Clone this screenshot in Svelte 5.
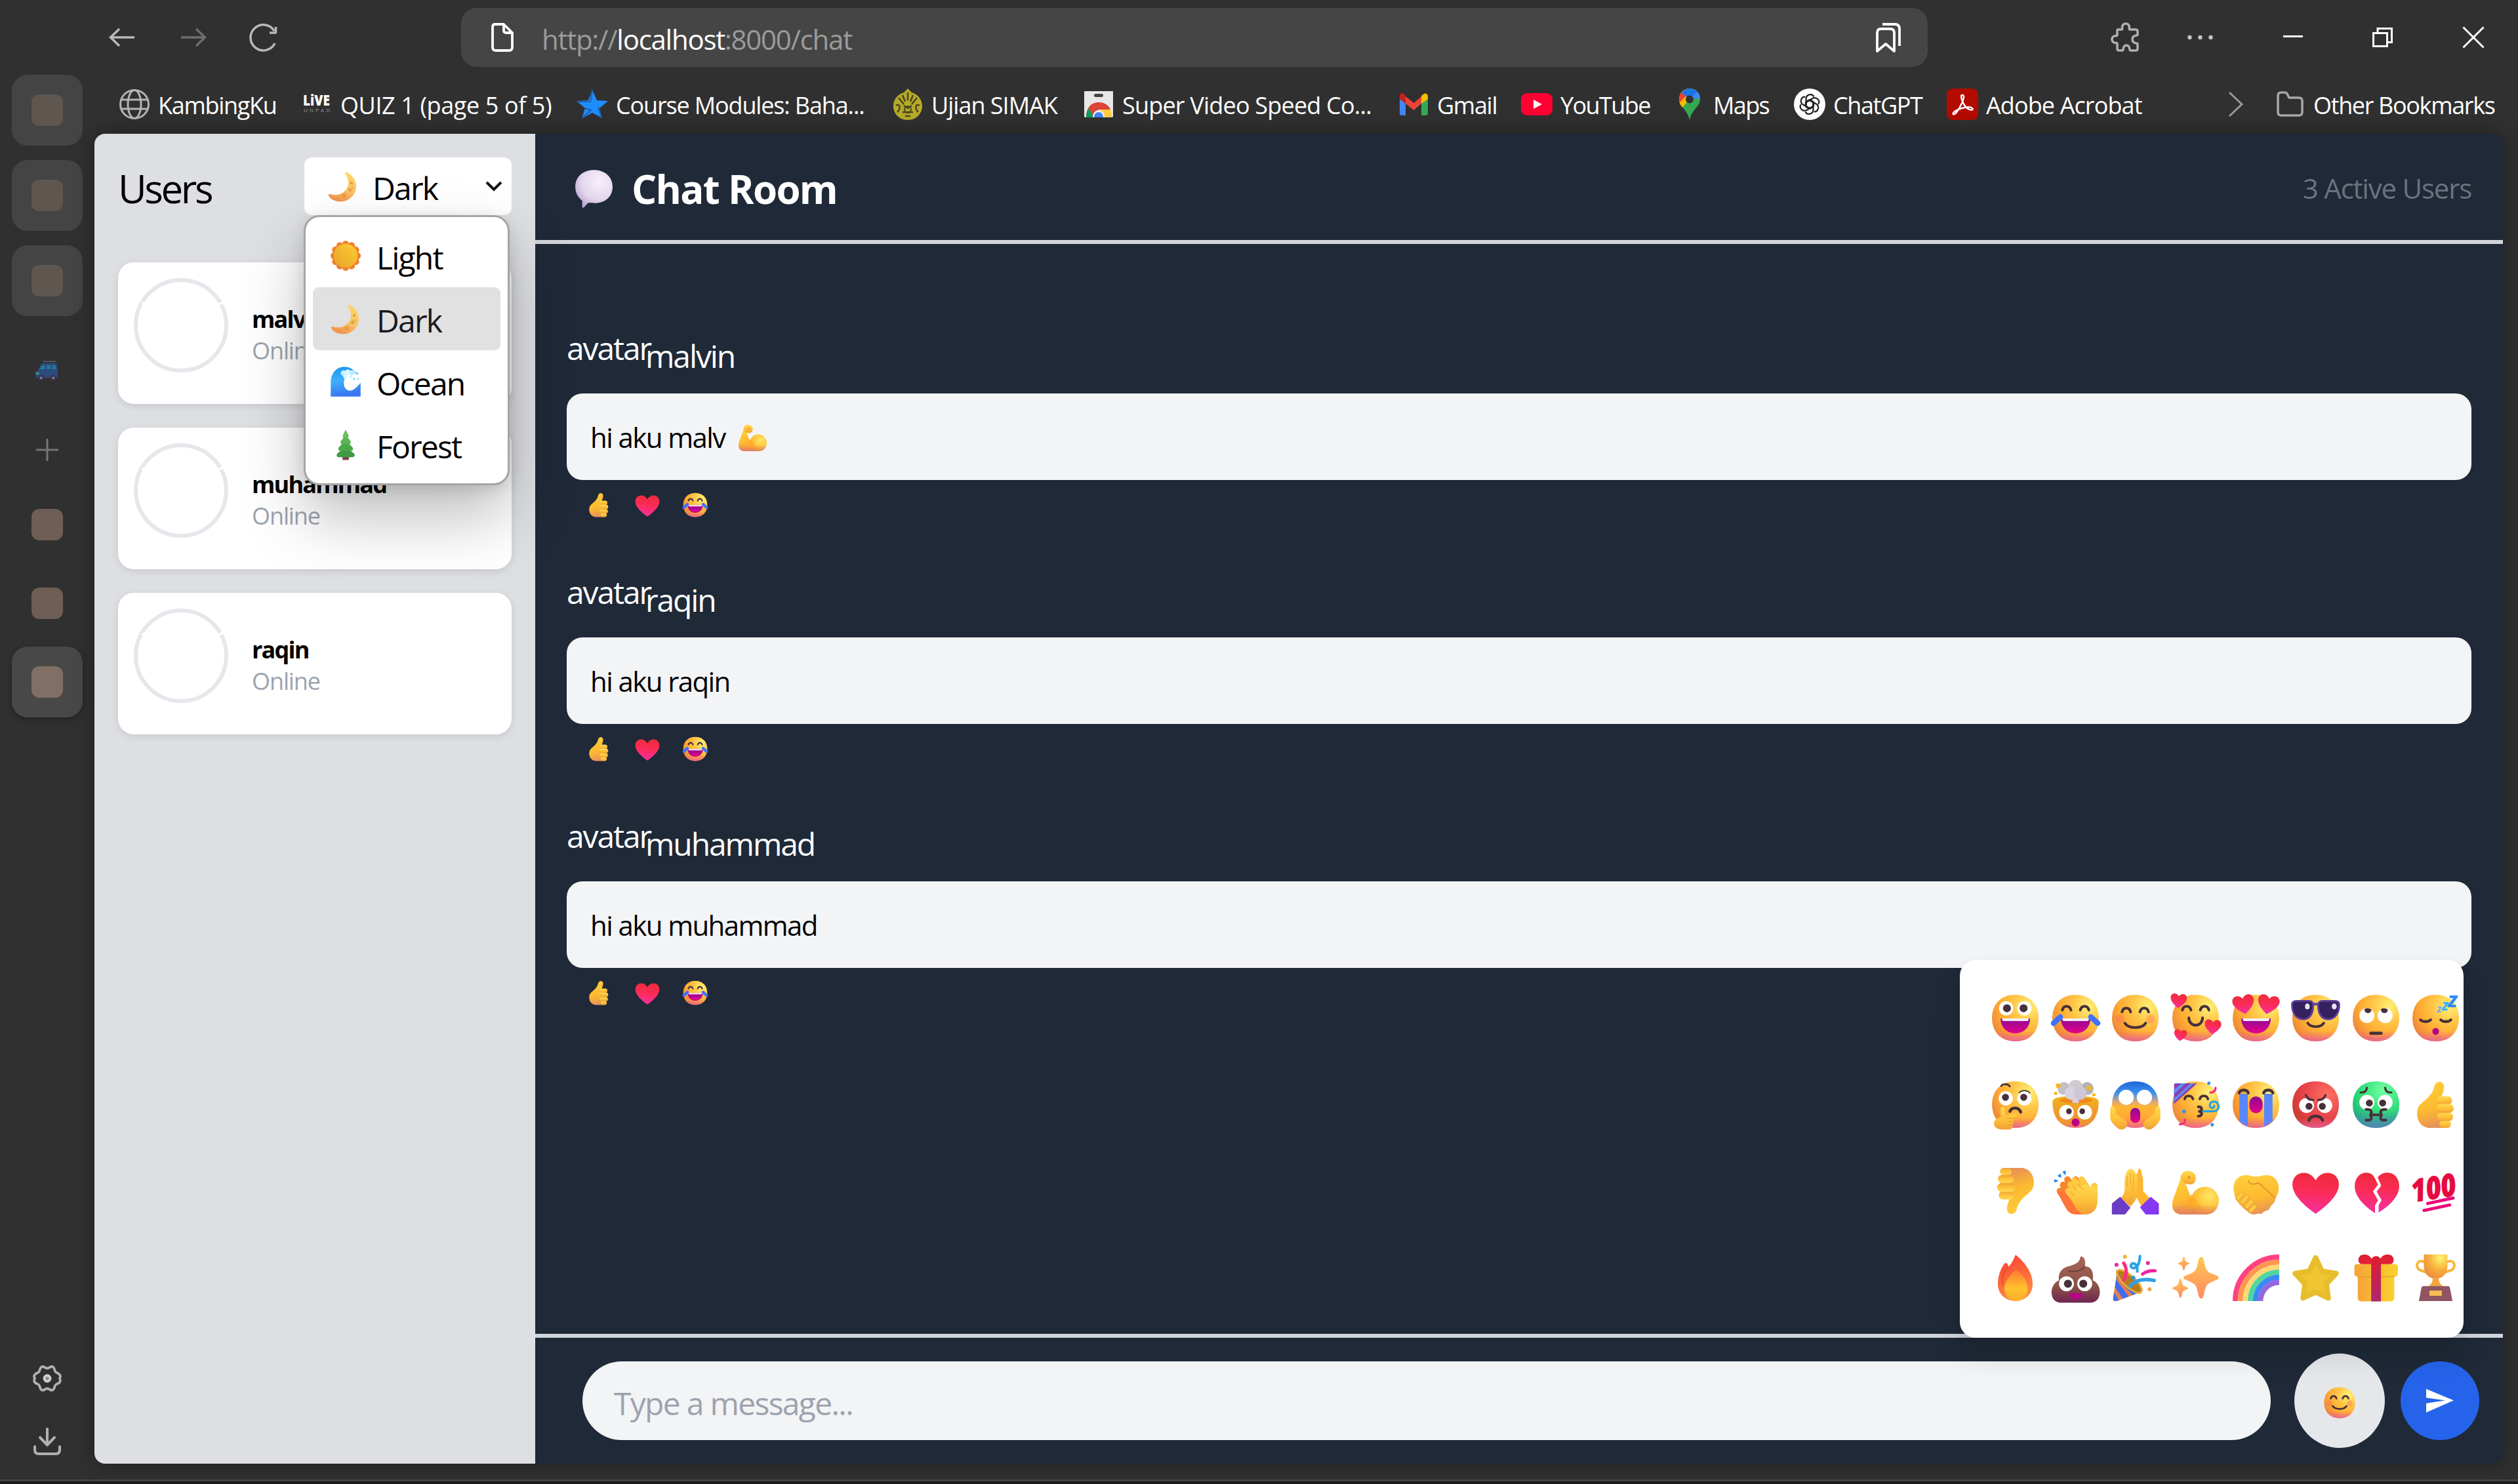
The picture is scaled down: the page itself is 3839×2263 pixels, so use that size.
<script>
  const FACE =
    'M16 30C25.33 30 30 23.73 30 16S25.33 2 16 2 2 8.27 2 16 6.67 30 16 30z';
  const INK = '#47303a';

  const face = (fill = 'e-face', rim = 'e-rim') =>
    `<path d="${FACE}" fill="url(#${fill})"/><path d="${FACE}" fill="url(#${rim})"/>`;
  const mirror = (s) => s + `<g transform="matrix(-1 0 0 1 32 0)">${s}</g>`;
  const dot = (x, y, r, fill) => `<circle cx="${x}" cy="${y}" r="${r}" fill="${fill}"/>`;
  const line = (d, w = 1.6, color = INK) =>
    `<path d="${d}" fill="none" stroke="${color}" stroke-width="${w}" stroke-linecap="round" stroke-linejoin="round"/>`;
  const shape = (d, fill) => `<path d="${d}" fill="${fill}"/>`;
  const eyes = (y, r = 4.3, dx = 0.4, pr = 2.2, dy = 0) =>
    mirror(dot(10.5, y, r, '#fff') + dot(10.5 + dx, y + dy, pr, INK));
  const happyEyes = (y) => mirror(line(`M8 ${y}C8.8 ${y - 3.1} 12.4 ${y - 3.1} 13.2 ${y}`));
  const grin =
    shape('M7.2 16.2H24.9C24.9 21.6 21 25.2 16 25.2S7.2 21.6 7.2 16.2z', 'url(#e-mouth)') +
    shape('M7.9 16.2H24.2L23.9 17.2Q23.7 17.8 23.1 17.8H9Q8.4 17.8 8.2 17.2z', '#f4eefa');
  const heart = (x, y, w, rot = 0, fill = 'url(#e-heart)') =>
    `<path transform="translate(${x} ${y}) rotate(${rot}) scale(${w})" fill="${fill}" d="M0 .45C-.3 .24-.5 .02-.5-.18C-.5-.34-.38-.43-.26-.43C-.14-.43-.05-.36 0-.27C.05-.36 .14-.43 .26-.43C.38-.43 .5-.34 .5-.18C.5 .02 .3 .24 0 .45z"/>`;
  const sparkle = (x, y, rx, ry) =>
    `<path transform="translate(${x} ${y}) scale(${rx} ${ry})" fill="url(#e-spark)" d="M0-1C.1-1 .14-.9 .2-.66C.27-.35 .38-.27 .68-.17C.9-.1 1-.08 1 0S.9 .1 .68 .17C.38 .27 .27 .35 .2 .66C.14 .9 .1 1 0 1S-.14 .9-.2 .66C-.27 .35-.38 .27-.68 .17C-.9 .1-1 .08-1 0S-.9-.1-.68-.17C-.38-.27-.27-.35-.2-.66C-.14-.9-.1-1 0-1z"/>`;
  const finger = (x, y, w, h) =>
    `<rect x="${x}" y="${y}" width="${w}" height="${h}" rx="${h / 2}" fill="url(#e-finger)"/>`;
  const thumb =
    shape('M15.2 5C16 1.2 21 1.5 21 5.2C21 8 19.8 10 19.4 11.5L20.5 12L21.5 30H12.5C8 30 4.8 26.3 4.8 21.4C4.8 15.6 8.6 15 12 11C13.8 9 14.6 7.5 15.2 5z', 'url(#e-hand)') +
    finger(18.2, 25.6, 7, 4.4) + finger(16.8, 20.8, 9.7, 5.1) + finger(16.6, 11, 9.3, 5) + finger(16.1, 15.6, 10.8, 5.3);

  const EMOJI = {
    grin: face() + eyes(10.1, 4.3, 0.5, 2.4) + grin,
    joy: face() + happyEyes(11.2) + grin + mirror(line('M6.8 15.3L2.7 19.1', 3.3, '#3f72ff')),
    smile:
      face() + mirror(dot(6.8, 16.5, 2.6, 'rgba(255,100,100,.35)')) + happyEyes(12.3) +
      line('M9.7 19C12 22.6 20 22.6 22.3 19'),
    adore:
      face() + happyEyes(11.2) + line('M11.9 15.8C12 21.8 20.1 21.8 20.2 15.8') +
      heart(5.7, 5.6, 9.8, 5) + heart(26.3, 21.3, 10, 5) + heart(6.8, 26.3, 7.8, 8),
    love: face() + mirror(heart(8.6, 7.8, 13, -10)) + grin,
    cool:
      face() + line('M11.2 19C13 21.9 19 21.9 20.9 19', 1.5) + line('M14 7.6H18', 1.6, '#6444a3') +
      mirror(
        '<path d="M1.8 8C1.8 6 3 5.7 5 5.7H11.8C14 5.7 14.5 6.6 14.5 8.4C14.5 13 12.6 16.7 8.6 16.7C4.2 16.7 1.8 13 1.8 8z" fill="#35205f" stroke="#5c3f99" stroke-width="1.1"/>'
      ) +
      '<ellipse cx="11" cy="9" rx="1.4" ry="1.8" fill="#e9e2f5"/><ellipse cx="27.2" cy="9" rx="1.5" ry="1.8" fill="#e9e2f5"/>',
    roll: face() + mirror(dot(10.5, 14.5, 4.5, '#fff')) + shape('M9.1 10.6C8.8 13.8 13.4 13.8 13.2 10.9C12 9.9 10.4 9.8 9.1 10.6zM19 10.6C18.7 13.8 23.3 13.8 23.1 10.9C21.9 9.9 20.3 9.8 19 10.6z', INK) + line('M12.9 25.1H19.1', 1.9),
    sleep:
      face() + mirror(line('M6.8 17C8.2 18.5 11.6 18.5 13 17')) + '<ellipse cx="16" cy="24" rx="2" ry="2.1" fill="#b4008c"/>' +
      '<g class="zzz"><text x="23.4" y="9.6" font-size="10" fill="#2e8cf6">Z</text><text x="19.8" y="11.6" font-size="7" fill="#3bb0fa">Z</text><text x="16.8" y="12.5" font-size="5" fill="#7fa9e6">Z</text></g>',
    think:
      face() + line('M7.5 4.8C8.8 3.2 11.6 3.4 12.8 5', 1) + line('M18.6 8.7C20 7.2 23.4 7.4 24.6 9', 1) +
      dot(10.3, 12.2, 4.3, '#fff') + dot(21.5, 12.2, 4.3, '#fff') + dot(10.1, 11.6, 2.1, INK) + dot(21.1, 11.6, 2.1, INK) +
      line('M12.8 20C14 17.4 18 17.4 19.3 20.5', 1.8) +
      shape('M7.3 23.5L7.2 19C7.2 17 9.6 17 9.9 19L10.2 22.3L15.8 21.2C17.5 20.9 17.7 22.9 16.4 23.3L14.2 24C15.6 24.2 15.6 25.8 14.7 26C15.5 26.6 15.2 27.8 14.3 28C14.6 29.6 14 31 12.5 31H8C4 31 3 28.5 3.2 27C3.4 25 5 24 7.3 23.5z', 'url(#e-finger)') +
      line('M11.5 24.3H14.5M12 26.2H14.4M11.8 28.2H14', 0.4, '#e89a2c'),
    blown:
      shape('M2.1 14.5C2 11.4 8 11 16 11S30 11.4 29.9 14.5C29.9 24 25 30 16 30S2.1 24 2.1 14.5z', 'url(#e-bowl)') +
      '<ellipse cx="16" cy="13.4" rx="10" ry="1.8" fill="#f0881c"/>' +
      shape('M13.6 11H18.4L17.8 15H14.2z', '#d9cfe6') +
      dot(9, 6.3, 3.9, '#c4c1c6') + dot(23, 6.3, 3.9, '#b5b3b5') + dot(16, 5.4, 4.3, '#cfcbd1') +
      dot(13.4, 9.1, 4, '#d8d2de') + dot(18.8, 9.1, 4, '#cdc6d4') +
      dot(5.5, 4.6, 1.4, '#fbb414') + dot(24, 6, 1.4, '#fbb414') + dot(4, 9.2, 1, '#fbb414') + dot(27, 10.1, 1, '#fbb414') +
      eyes(20.6, 4.4, 1.5, 1.7, -0.6) + dot(16, 26.7, 2.4, '#bd0088'),
    scream:
      face('e-scream') + mirror(dot(10.5, 11.6, 4.6, '#fff')) +
      '<rect x="13" y="18" width="6" height="9" rx="3" fill="url(#e-mouth)"/>' +
      mirror(shape('M.9 18.6C.9 16.7 3.6 16.7 3.9 18.5L4.4 21.6L9.4 24.8C12 26.8 11.5 31 7.4 31C5.5 31 1 26.6 .9 24z', 'url(#e-finger)')),
    party:
      face() + shape('M3 4.2Q3 3.2 4 3.2H16.9L3 15.6z', '#8b3fb0') + shape('M3 7L7.5 3.2H10L3 9.7zM3 12.2L13 3.2H15L3 14.2z', '#5b8df5') +
      line('M9.4 12.6C10 10.1 13.6 10.1 14.4 12.6M18.5 12.6C19.2 10.1 22.7 10.1 23.4 12.6', 1.5) +
      line('M17.6 17.3C20.4 17 20 19.9 18.2 20.1C20.4 20.2 20 23.3 17.6 22.9', 1.6) +
      line('M20.6 20H26.5C29.7 20 30.5 17.3 29.3 15.3C27.9 13.4 24.6 14 24.5 16.4C24.6 18.4 27.4 18.4 27.2 16.7', 1.2, '#1fa3e0') +
      line('M24.9 8.7C27 8.8 27.9 7.6 28 5.9M6.5 27.8C8.6 28 9.6 27 9.6 25', 1.3, '#f5298c') +
      dot(24, 3.1, 1, '#2f93ee') + dot(9, 20.1, 1.1, '#2f93ee') + dot(26, 28.1, 1, '#2f93ee'),
    sob:
      face() + mirror(shape('M6 9.5H11.1V29L9.5 28.4L6 26z', '#5a86ff') + line('M5.8 9C6.6 6.6 10.6 6.6 11.4 9', 1.7)) +
      '<rect x="12" y="11.1" width="8" height="10" rx="4" fill="url(#e-mouth)"/>',
    angry: face('e-red', 'e-rim') + eyes(16.5, 4.5, 1.5, 2.1, 0.5) + mirror(line('M10.1 10.2C10.7 12.3 12.3 13.2 14.4 13.2', 1.3)) + line('M11.9 25.4C13.2 22.1 18.8 22.1 20.2 25.4', 1.8),
    sick:
      face('e-green', 'e-rimblue') + eyes(14.6, 4.5, 1.5, 2.1, 0.4) + mirror(line('M6.7 8.7C9.3 8.9 10.4 7.6 10.5 5.8', 1.2)) +
      line('M12.6 22.2H19.4', 1.5) + mirror(line('M10 18.9C13 18.6 13.8 20 12.8 22.2C13.8 24.7 13 25.6 10 25.3', 1.6)),
    up: thumb,
    down: `<g transform="rotate(180 16 16)">${thumb}</g>`,
    clap:
      line('M11.1 9L17 19M8.5 12.2L15 22M6.6 15.9L12 24M16 9L20 17', 4, '#f5872a') + shape('M4.8 16.5L17 14L21 30H16.5C13 30 11.5 28.5 10 26z', '#ff743a') +
      line('M19.7 8.9L25 17M15.3 9.4L22 19M12.8 12L20 21M11.5 16L18 24M27.4 12.8V21', 3.7, '#ffca42') +
      shape('M11 17.5L21 12L29.2 14V22C29.2 27 26 30 22 30C18.5 30 17 27.5 15.5 25z', 'url(#e-finger)') +
      line('M14.3 12.8L16.8 16M17.6 11.5L20.4 15M13 16.3L14.8 18.7', 0.4, '#ee9b2b') +
      shape('M8 4.3L10 3.6V6.5zM5 6.8L7 5.3L7.4 8zM3.2 8.7L5.8 9.8L3.2 10.8z', '#1c7ff0'),
    pray:
      shape('M16.2 8L18.2 2.4Q19.6 2.2 20 6L20.7 8.5V16L24.6 20L20 25.6L16.2 19z', '#ffb52e') +
      shape('M9.5 10C9.7 6.5 11 3 12.8 2.6C14.8 2.2 15.6 4.4 17.2 6.2V17.5C17 21 15 23 13 25.4L7.4 20C9.4 18 9.9 16 9.5 10z', 'url(#e-finger)') +
      line('M11.2 7V13M13.2 5V12M15.2 6L14.6 16', 0.35, '#e8982a') +
      shape('M1.9 23.4L6.9 19.4L13.1 26L9.8 30H1.9z', '#6a3cc4') + shape('M30.2 23.4L25.3 19.4L18.8 25.7L22.3 30H30.2z', '#8438f2'),
    flex:
      shape('M7.5 7L2.4 21C.8 27 3.4 30 8 30H23V19L13.2 20L10 11.5z', 'url(#e-hand)') +
      shape('M6.8 8C7.6 4 10.4 3.2 13 4C16.4 5 16.8 8.2 15.4 10.6C14.2 12.6 11.4 12 9.4 11.4z', 'url(#e-finger)') +
      line('M12.8 7.2C11 6.9 11.2 8.6 12.7 8.3', 0.5, '#d98020') +
      dot(21.6, 21.7, 8.4, 'url(#e-bicep)') + shape('M13.2 17.8L20.5 27H8z', 'rgba(255,170,40,.75)') +
      shape('M2.1 24H29.6C29 28 26 30 22 30H8C4.6 30 2.4 28 2.1 24z', 'url(#e-rim2)'),
    shake:
      shape('M2.5 14C2.5 9 6 6.3 10 6.3C12.5 6.3 14 7.2 16 7.2S20 6.3 22.5 6.3C27 6.3 29.7 10 29.7 14C29.7 17 28.5 18.5 27.8 20.5C27.4 23.6 25 24 24.4 26C23.4 28.4 21.3 27.4 20.3 28.8C19 30.4 17 29 16 29.8C14 30.6 12 29.5 10 27.5C7 25 4.6 22.5 3.6 20C3 18 2.5 16 2.5 14z', 'url(#e-hand)') +
      line('M18 11.2L27.2 19.8', 0.7, '#e3912a') + line('M17.5 11C14.6 12.3 11.6 11.8 11.8 9.8', 0.7, '#e3912a') +
      line('M5.2 20.2L7.4 17.8M7.6 22.8L10.4 19.8M10.4 25.4L13.2 22.4M13 27.6L15 25.4', 3, '#e9a02c') +
      line('M5.3 20L7.4 17.7M7.7 22.6L10.4 19.7M10.5 25.2L13.2 22.3M13 27.5L15 25.3', 2.3, '#ffc744'),
    heart: heart(16, 17, 28),
    broken:
      shape('M15.4 29.2C7 23.6 3.2 18 3.2 13C3.2 7.8 6.5 4.8 10 4.8C12.8 4.8 14.3 6.2 15 7.6L17.2 12L14.2 16L17.2 21.5L15.4 24.6z', 'url(#e-heart)') +
      shape('M17.6 28.8C26 23.6 30 18 30 13C30 7.8 26.7 4.8 23 4.8C20.4 4.8 18.4 5.8 17 7.7L19.2 12.6L16.4 16.2L19.4 21.4L17.6 24.4z', 'url(#e-heart)'),
    hundred:
      '<g transform="rotate(-9 16 16)"><text class="hundred" x="1.5" y="20.5" font-size="19" textLength="27" lengthAdjust="spacingAndGlyphs">100</text></g>' +
      line('M11.2 23.4L26.5 20.1M9 27.6L24.4 24.3', 1.9, '#ea0b78'),
    fire:
      shape('M16.2 2.2C20 5 26.5 12 26.5 19.5C26.5 26 22 30 16 30S5.5 26 5.5 19.5C5.5 14 8 9.5 9.4 7.5C10.8 6.3 11.8 8 12 9.4C14 7.4 15.2 4.5 16.2 2.2z', 'url(#e-fire)') +
      line('M11 10C8.6 13 7.8 17 8.2 20', 1.3, 'rgba(215,70,40,.5)') +
      shape('M16.6 11.2C19.5 13.5 23.5 17.6 23.5 22.6C23.5 27 20.5 30 16.5 30S9.5 27 9.5 22.6C9.5 18 13.5 13.5 16.6 11.2z', 'url(#e-flame)'),
    poop:
      shape('M19.5 3.2C21 3.2 22.4 6 21.6 9C25.4 9.4 27 12 26.4 17.6C29.2 18.8 30.6 21.6 30.6 24.6C30.6 28.6 28.2 31 25 31H7C3.8 31 1.5 28.6 1.5 24.8C1.5 21.6 3.2 18.8 6 17.6C5.4 13.6 7 10.6 11 9.3C15.6 8 18.6 6.6 18.6 4.2Q18.7 3.2 19.5 3.2z', 'url(#e-poop)') +
      line('M12 12C16 12.6 20 11.6 21.4 9.4', 0.6, '#63352f') +
      eyes(19.6, 4.5, 0.9, 2.4) + shape('M12.1 25.4H20.1C20 30.3 12.2 30.3 12.1 25.4z', '#bd0088'),
    popper:
      shape('M5 12.6L2.6 28.4Q2.6 30.4 5 30L19.4 24.6z', '#e0804e') +
      shape('M4.4 17L12 27.3L8.6 28.6L3.8 21.6zM3.2 25L6.2 29.6L3.6 30Q2.6 29.6 2.7 28.3zM4.8 13.6L17 25.4L14.4 26.4L4.6 15.6z', '#3f6cf2') +
      '<ellipse cx="12.4" cy="18.2" rx="9.6" ry="3.4" transform="rotate(42 12.4 18.2)" fill="#b57c1c" stroke="#eaa83a" stroke-width="1.2"/>' +
      line('M9 7.2C11 10 11 14 9.2 17.4', 2, '#fb2d84') + line('M13 21C16 17.2 21 16.4 27.4 17.6', 2.1, '#31a0e8') +
      line('M20.4 13.8C22.4 12.2 25 11.6 28 11.8', 1.9, '#f222a0') + line('M18.8 3C18.6 7 17.4 10 15 10.2C12.6 10 13 7 15.2 7.4C17 8 17.4 10 17.2 12.2', 1.6, '#2aa3e0') +
      dot(9.8, 3.4, 1.2, '#eab43c') + dot(4.7, 8.2, 1.2, '#e32aa6') + dot(23.6, 7.1, 1.2, '#e32aa6') + dot(14.8, 16, 1.2, '#2f93d8') + dot(24.6, 22.9, 1.2, '#eaa94c'),
    sparkles: sparkle(19.3, 16, 10.5, 12.5) + sparkle(8.9, 7.4, 3.4, 4.1) + sparkle(6.8, 22.3, 4.7, 5.7),
    rainbow: ['#ff4180', '#ff9550', '#ffd977', '#4fd79e', '#3b88fb', '#9468dc']
      .map((c, i) => {
        const r = 26.5 - i * 3.05;
        return `<path d="M${30 - r} 30A${r} ${r} 0 0 1 30 ${30 - r}" fill="none" stroke="${c}" stroke-width="3.1"/>`;
      })
      .join(''),
    star: '<path d="M16 4L19.8 12L28.3 13.4L22.4 19.8L23.6 28.2L16 24.6L8.4 28.2L9.6 19.8L3.7 13.4L12.2 12z" fill="#efc631" stroke="#e8bd2c" stroke-width="3.2" stroke-linejoin="round"/>',
    gift:
      '<rect x="5" y="13" width="22" height="17.2" rx="2" fill="url(#e-gift)"/><rect x="3" y="7.8" width="26.2" height="7.4" rx="1.6" fill="url(#e-gift)"/>' +
      line('M5 15.4H27', 0.5, '#e39a22') +
      shape('M13 7.8H7.5C4.6 7.8 4.4 2 9 2C11.6 2 13 3.6 13.6 5zM19 7.8H24.6C27.6 7.8 27.6 2 23 2C20.4 2 19 3.6 18.4 5z', '#e02035') +
      '<path d="M13.1 30.2V6C13.1 2 19 2 19 6V30.2z" fill="url(#e-ribbon)"/>',
    trophy:
      line('M9 6.4C4.4 4.4 3.4 10 6.6 11.4L10 12.6M23 6.4C27.6 4.4 28.6 10 25.4 11.4L22 12.6', 1.5, '#f6b436') +
      shape('M8.9 2H23.1V9C23.1 13.6 20 16.6 16 16.6S8.9 13.6 8.9 9z', 'url(#e-cup)') +
      shape('M14.2 16H17.8C17.8 18.6 18.6 19.8 20.6 21.2H11.4C13.4 19.8 14.2 18.6 14.2 16z', '#f3a63c') +
      shape('M8.6 21Q7.6 21 7.4 22L5.9 30H26.1L24.6 22Q24.4 21 23.4 21z', '#8f5563') +
      '<rect x="12.2" y="23.7" width="7.5" height="3.2" rx=".5" fill="#f8bd50"/>',
    moon:
      shape('M19.6 3C26.4 6 30.2 13.8 27.4 21C24.2 29 15.6 32.2 8 29.4C5 28.2 2.8 26 2.4 24.4C2.2 23.2 3.2 23.2 4.4 23.6C12 25.6 18.8 22 20.6 15.6C21.6 11.8 20.4 8 18.6 5C17.6 3.2 18 2.4 19.6 3z', 'url(#e-moon)') +
      dot(24, 13, 1.3, '#e2a045') + dot(22.6, 19.4, 1.6, '#e2a045') + dot(17, 25, 2, '#e59a4b') + dot(11.4, 27, 1.2, '#e59a4b') + dot(25, 17.4, 0.8, '#e2a045'),
    sun:
      `<g fill="#f0812c">${Array.from({ length: 12 }, (_, i) => `<circle cx="16" cy="5" r="3.2" transform="rotate(${i * 30} 16 16)"/>`).join('')}</g>` +
      dot(16, 16, 11.2, 'url(#e-sun)'),
    wave:
      shape('M2 30V17C2 8 7.6 2 14.6 2C20 2 23.6 4.6 25.6 8L20 8.6C13 9.6 12 24 19.6 24.4C24.4 24.4 27 20 30 17V30z', 'url(#e-wave)') +
      dot(14, 8, 2.6, '#bfeeff') + dot(18, 7.4, 2.8, '#d8f6ff') + dot(22, 7.6, 2.4, '#bfeeff') + dot(15.6, 11.2, 1.9, '#d8f6ff') + dot(20.6, 11.4, 1.6, '#d8f6ff') +
      dot(26.6, 8.2, 1.2, '#6fc8fa') + dot(24, 13.6, 1.1, '#8bd6fb') + dot(27.8, 13.4, 0.8, '#6fc8fa'),
    tree:
      shape('M13 26H19V30.4H13z', '#84404a') + shape('M16 18L24 24.4Q25.6 27.6 22 27.8H10Q6.4 27.6 8 24.4z', '#3f9a45') +
      shape('M16 12L22.4 18.4Q24 21.6 21 21.8H11Q8 21.6 9.6 18.4z', '#4aa94a') + shape('M16 7L20.4 12.4Q21.6 15.4 19 15.6H13Q10.4 15.4 11.6 12.4z', '#58b551') +
      shape('M16 2L18.6 7Q19.2 9.6 17 9.8H15Q12.8 9.6 13.4 7z', '#66c25c'),
    speech:
      shape('M16 2.6C24.4 2.6 30 7.8 30 15.2S24.4 27.4 16.6 27.4C14 27.4 12.6 27 11.4 27.4L8.4 30.8Q7.2 31.4 7.2 29.8V25.6C4 23 2 19.6 2 15.2C2 7.8 7.6 2.6 16 2.6z', 'url(#e-speech)'),
    car:
      shape('M3 19L8.4 8.6Q9 7 11 7H25Q27.6 7 27.8 9L29 16V25H2V21Q2 19.6 3 19z', '#2c4a7c') + shape('M7 14L9.8 9.4H13.4V14.6H6.6zM15.4 9.4H20V14.6H15.4zM22 9.4H26L26.8 14.6H22z', '#26779a') +
      line('M11 5H26', 1.2, '#5b6075') + dot(8.6, 25, 3.6, '#3a3050') + dot(23.4, 25, 3.6, '#3a3050') + dot(8.6, 25, 1.7, '#80748c') + dot(23.4, 25, 1.7, '#80748c') + shape('M2 18H6V21H2z', '#3f8f86')
  };

  const art = (name) => `<svg viewBox="0 0 32 32">${EMOJI[name]}</svg>`;

  const picker = [
    'grin', 'joy', 'smile', 'adore', 'love', 'cool', 'roll', 'sleep',
    'think', 'blown', 'scream', 'party', 'sob', 'angry', 'sick', 'up',
    'down', 'clap', 'pray', 'flex', 'shake', 'heart', 'broken', 'hundred',
    'fire', 'poop', 'popper', 'sparkles', 'rainbow', 'star', 'gift', 'trophy'
  ];

  const themes = [
    { icon: 'sun', name: 'Light' },
    { icon: 'moon', name: 'Dark' },
    { icon: 'wave', name: 'Ocean' },
    { icon: 'tree', name: 'Forest' }
  ];
  const theme = 'Dark';

  const users = ['malvin', 'muhammad', 'raqin'];

  const messages = [
    { from: 'malvin', text: 'hi aku malv', emoji: 'flex' },
    { from: 'raqin', text: 'hi aku raqin' },
    { from: 'muhammad', text: 'hi aku muhammad' }
  ];
  const reactions = ['up', 'heart', 'joy'];

  // width: label box in px; tracking: letter spacing in px
  const bookmarks = [
    { icon: 'globe', label: 'KambingKu', width: 182, tracking: -1.3 },
    { icon: 'live', label: 'QUIZ 1 (page 5 of 5)', width: 324, tracking: -0.4 },
    { icon: 'blueStar', label: 'Course Modules: Baha...', width: 385, tracking: -1.15 },
    { icon: 'crest', label: 'Ujian SIMAK', width: 195, tracking: -1 },
    { icon: 'store', label: 'Super Video Speed Co...', width: 384, tracking: -0.8 },
    { icon: 'gmail', label: 'Gmail', width: 92, tracking: -1.3 },
    { icon: 'youtube', label: 'YouTube', width: 137, tracking: -1.6 },
    { icon: 'maps', label: 'Maps', width: 87, tracking: -1.6 },
    { icon: 'gpt', label: 'ChatGPT', width: 137, tracking: -1.4 },
    { icon: 'acrobat', label: 'Adobe Acrobat', width: 239, tracking: -0.9 }
  ];

  const petals = [0, 60, 120, 180, 240, 300];
</script>

{#snippet favicon(name)}
  <svg class="favicon" viewBox="0 0 48 48">
    {#if name === 'globe'}
      <g fill="none" stroke="#b4b4b4" stroke-width="3">
        <circle cx="24" cy="24" r="21.5" /><ellipse cx="24" cy="24" rx="10" ry="21.5" /><path d="M3.5 17H44.500M3.500 31H44.500" />
      </g>
    {:else if name === 'live'}
      <text x="3" y="25.500" class="live" textLength="41" lengthAdjust="spacingAndGlyphs">LiVE</text>
      <text x="4" y="36" class="unpad" textLength="40">UNPAD</text>
    {:else if name === 'blueStar'}
      <path d="M24 2L31 18L48 19L35 30L39 45L24 37L8 46L13 30L0 19L18 18z" fill="#1f8cff" />
      <path d="M24 2L21 20L1 20M13 30L22 33L9 45M33 28L38 44" fill="none" stroke="#1a5fae" stroke-width="2" />
    {:else if name === 'crest'}
      <path d="M24 0L30 6C40 9 46 17 46 27C46 37 38 48 24 48S2 37 2 27C2 17 8 9 18 6z" fill="#b5a92b" />
      <path d="M10 14L18 24M24 6V18M38 14L30 24M16 10L20 20M32 10L28 20M6 26C12 22 14 30 8 36M42 26C36 22 34 30 40 36M18 26L24 30L30 26M16 36H32M20 42H28" fill="none" stroke="#4a471c" stroke-width="2.500" />
      <circle cx="24" cy="32" r="5" fill="none" stroke="#4a471c" stroke-width="2" />
    {:else if name === 'store'}
      <path d="M2 4H46V42Q46 44 44 44H4Q2 44 2 42z" fill="#e8e8e8" />
      <rect x="17" y="8" width="14" height="5" rx="2.500" fill="#444" />
      <path d="M5 44C5 30 12 21 24 21C33 21 39 25 42 32H24L16 44z" fill="#db4437" />
      <path d="M5 44C5 38 6 34 9 30L17 44z" fill="#0f9d58" /><path d="M24 32H42C43 35 44 39 44 44H31z" fill="#ffcd40" />
      <path d="M15 44C15 37 19 33 24 33S33 37 33 44z" fill="#f1f1f1" /><path d="M17 44C17 39 20 36 24 36S31 39 31 44z" fill="#4285f4" />
    {:else if name === 'gmail'}
      <path d="M3 12V38Q3 41 6 41H12V19z" fill="#4285f4" /><path d="M36 19V41H43Q46 41 46 38V12z" fill="#34a853" />
      <path d="M12 12L24.500 22L36 12V23L24.500 33L12 23z" fill="#ea4335" />
      <path d="M3 12C3 7 7 6 10 9L12 11V23L3 16z" fill="#c5221f" /><path d="M36 11L39 9C42 6 46 8 46 12V16L36 23z" fill="#fbbc04" />
    {:else if name === 'youtube'}
      <rect x="0" y="7" width="48" height="34" rx="9" fill="#ff0033" /><path d="M19 17L32 24L19 31z" fill="#fff" />
    {:else if name === 'maps'}
      <path d="M24 0C15 0 8 7 8 16C8 28 21 32 24 48C27 32 40 28 40 16C40 7 33 0 24 0z" fill="#34a853" />
      <path d="M8 17C8 22 10 25 13 29L35 4C32 1 28 0 24 0C15 0 8 7 8 17z" fill="#fbbc04" />
      <path d="M12 6C9 9 8 12 8 17C8 19 8 20 9 21L20 10z" fill="#ea4335" /><path d="M12 6C15 2 19 0 24 0C29 0 33 2 36 5L24 17z" fill="#1a73e8" />
      <path d="M36 5C39 8 40 11 40 15L24 16z" fill="#4285f4" /><circle cx="24" cy="16.500" r="6" fill="#333" />
    {:else if name === 'gpt'}
      <circle cx="24" cy="24" r="24" fill="#fff" />
      <g fill="none" stroke="#222" stroke-width="2.200" stroke-linejoin="round">
        {#each petals as a}
          <path transform="rotate({a} 24 24)" d="M24 30L18.500 27V16C18.500 8.500 28 7 30.500 12.500M18.500 20L24 17" />
        {/each}
      </g>
    {:else if name === 'acrobat'}
      <rect width="48" height="48" rx="9" fill="#b30b00" />
      <path d="M24 10C19 9 25 25 31 30C36 34 42 33 39 30C35 26 18 30 11 36C7 40 12 41 16 35C20 29 27 16 26 12Q25.500 10 24 10z" fill="none" stroke="#fff" stroke-width="2.400" />
    {/if}
  </svg>
{/snippet}

{#snippet emoji(name)}
  <span class="emoji">{@html art(name)}</span>
{/snippet}

<svg class="defs" width="0" height="0" aria-hidden="true">
  <defs>
    <radialGradient id="e-face" cx=".78" cy=".25" r=".85">
      <stop offset="0" stop-color="#fff176" /><stop offset=".4" stop-color="#ffc648" /><stop offset=".72" stop-color="#ffac33" /><stop offset="1" stop-color="#ef8a3a" />
    </radialGradient>
    <linearGradient id="e-rim" x2="0" y2="1"><stop offset=".78" stop-color="#f0609a" stop-opacity="0" /><stop offset="1" stop-color="#e8609f" stop-opacity=".85" /></linearGradient>
    <linearGradient id="e-rimblue" x2="0" y2="1"><stop offset=".6" stop-color="#4a80b0" stop-opacity="0" /><stop offset="1" stop-color="#5a82c0" stop-opacity=".9" /></linearGradient>
    <linearGradient id="e-rim2" x2="0" y2="1"><stop offset="0" stop-color="#e08060" stop-opacity="0" /><stop offset="1" stop-color="#e07f62" stop-opacity=".9" /></linearGradient>
    <linearGradient id="e-mouth" x2="0" y2="1"><stop offset="0" stop-color="#8d0a94" /><stop offset="1" stop-color="#e6008a" /></linearGradient>
    <linearGradient id="e-scream" x2="0" y2="1"><stop offset="0" stop-color="#1f66d8" /><stop offset=".25" stop-color="#3d92ee" /><stop offset=".45" stop-color="#e5a96c" /><stop offset=".55" stop-color="#ffb634" /><stop offset="1" stop-color="#ff9a35" /></linearGradient>
    <radialGradient id="e-red" cx=".75" cy=".3" r=".85"><stop offset="0" stop-color="#ff7061" /><stop offset=".6" stop-color="#e8424a" /><stop offset="1" stop-color="#c93a2e" /></radialGradient>
    <radialGradient id="e-green" cx=".65" cy=".2" r=".85"><stop offset="0" stop-color="#72ff9f" /><stop offset=".6" stop-color="#2cdc78" /><stop offset="1" stop-color="#22a878" /></radialGradient>
    <linearGradient id="e-bowl" x2="0" y2="1"><stop offset="0" stop-color="#f0b51c" /><stop offset=".5" stop-color="#ee9a2c" /><stop offset=".85" stop-color="#f0952f" /><stop offset="1" stop-color="#ec6f8c" /></linearGradient>
    <linearGradient id="e-hand" x1=".3" x2=".5" y2="1"><stop offset="0" stop-color="#ffcf3d" /><stop offset=".6" stop-color="#fdb92f" /><stop offset="1" stop-color="#e8925a" /></linearGradient>
    <linearGradient id="e-finger" x2="0" y2="1"><stop offset="0" stop-color="#ffda50" /><stop offset=".6" stop-color="#fdbd38" /><stop offset="1" stop-color="#f0a038" /></linearGradient>
    <radialGradient id="e-bicep" cx=".65" cy=".35" r=".7"><stop offset="0" stop-color="#ffe860" /><stop offset="1" stop-color="#ffae28" /></radialGradient>
    <linearGradient id="e-heart" x1=".6" x2=".45" y2="1"><stop offset="0" stop-color="#ee2b3c" /><stop offset=".45" stop-color="#fb2c55" /><stop offset="1" stop-color="#f52fa4" /></linearGradient>
    <linearGradient id="e-fire" x2=".3" y2="1"><stop offset="0" stop-color="#ff3c3c" /><stop offset=".5" stop-color="#fb6436" /><stop offset="1" stop-color="#ff8a44" /></linearGradient>
    <linearGradient id="e-flame" x2="0" y2="1"><stop offset="0" stop-color="#ff7a32" /><stop offset=".6" stop-color="#ffc22c" /><stop offset="1" stop-color="#ffab2e" /></linearGradient>
    <linearGradient id="e-poop" x2="0" y2="1"><stop offset="0" stop-color="#a8675a" /><stop offset=".65" stop-color="#8a5246" /><stop offset="1" stop-color="#702553" /></linearGradient>
    <linearGradient id="e-spark" x2="0" y2="1"><stop offset="0" stop-color="#ffc850" /><stop offset="1" stop-color="#ff8a62" /></linearGradient>
    <linearGradient id="e-gift"><stop offset="0" stop-color="#f5a43a" /><stop offset="1" stop-color="#fad22c" /></linearGradient>
    <linearGradient id="e-ribbon" x2="0" y2="1"><stop offset="0" stop-color="#dc1e30" /><stop offset="1" stop-color="#b02672" /></linearGradient>
    <radialGradient id="e-cup" cx=".7" cy=".15" r=".95"><stop offset="0" stop-color="#fff570" /><stop offset=".5" stop-color="#f7b03c" /><stop offset="1" stop-color="#ea8440" /></radialGradient>
    <linearGradient id="e-moon" x1=".8" x2=".4" y2="1"><stop offset="0" stop-color="#fbd768" /><stop offset=".6" stop-color="#f9c265" /><stop offset="1" stop-color="#f3924c" /></linearGradient>
    <linearGradient id="e-sun" x1="1" x2="0" y2="1"><stop offset="0" stop-color="#ffcf2f" /><stop offset="1" stop-color="#e6a02c" /></linearGradient>
    <linearGradient id="e-wave" x2=".2" y2="1"><stop offset="0" stop-color="#1c96e8" /><stop offset=".5" stop-color="#3cb0fb" /><stop offset="1" stop-color="#3a76f0" /></linearGradient>
    <radialGradient id="e-speech" cx=".65" cy=".3" r=".8"><stop offset="0" stop-color="#f7f1fa" /><stop offset=".6" stop-color="#e3d7ec" /><stop offset="1" stop-color="#b9a0d3" /></radialGradient>
  </defs>
</svg>

<div class="window">
  <div class="browser">
    <aside class="rail">
      <div class="tab"><i></i></div>
      <div class="tab"><i></i></div>
      <div class="tab"><i></i></div>
      <div class="slot car">{@render emoji('car')}</div>
      <div class="slot add">
        <svg viewBox="0 0 34 34"><path d="M17 0V34M0 17H34" stroke="#757575" stroke-width="3" /></svg>
      </div>
      <div class="slot pinned"><i></i></div>
      <div class="slot pinned"><i></i></div>
      <div class="tab active"><i></i></div>
      <div class="tools">
        <div class="tool">
          <svg viewBox="0 0 48 48" fill="none" stroke="#b0b0b0" stroke-width="3.800" stroke-linejoin="round">
            <path d="M20 7Q24 10 28 7Q33 4 35 10Q36 15 40 16Q46 19 43 24Q46 29 40 32Q36 33 35 38Q33 44 28 41Q24 38 20 41Q15 44 13 38Q12 33 8 32Q2 29 5 24Q2 19 8 16Q12 15 13 10Q15 4 20 7z" />
            <circle cx="24" cy="24" r="4.500" fill="#8c8c8c" stroke="#cfcfcf" />
          </svg>
        </div>
        <div class="tool">
          <svg viewBox="0 0 48 48" fill="none" stroke="#b0b0b0" stroke-width="4" stroke-linecap="round" stroke-linejoin="round">
            <path d="M24 5V29M13 18L24 29.500L35 18M5 32V37Q5 43 11 43H37Q43 43 43 37V32" />
          </svg>
        </div>
      </div>
    </aside>

    <div class="body">
      <nav class="navbar">
        <svg class="icon" viewBox="0 0 48 48"><path d="M43 24H7M20 11L6.500 24L20 37" stroke="#b9b9b9" stroke-width="3.500" /></svg>
        <svg class="icon forward" viewBox="0 0 48 48"><path d="M5 24H41M28 11L41.500 24L28 37" stroke="#6d6d6d" stroke-width="3.500" /></svg>
        <svg class="icon refresh" viewBox="0 0 48 48"><path d="M41 14A19.500 19.500 0 1 0 42 33M43.500 8V16Q43.500 17 42.500 17H34" stroke="#b9b9b9" stroke-width="3.500" /></svg>

        <div class="address">
          <svg class="icon" viewBox="0 0 48 48"><path d="M13 4H26L39 17V39Q39 44 34 44H14Q9 44 9 39V8Q9 4 13 4zM26 4V13Q26 17 30 17H39" stroke="#fff" stroke-width="3.800" stroke-linejoin="round" /></svg>
          <span class="url">http://<b>localhost</b>:8000/chat</span>
          <svg class="icon collections" viewBox="0 0 48 48"><path d="M7 45V17Q7 11 13 11H27Q33 11 33 17V45L20 34zM15 4H34Q41 4 41 11V37" stroke="#fff" stroke-width="3.800" stroke-linejoin="round" /></svg>
        </div>

        <svg class="icon puzzle" viewBox="0 0 48 48"><path d="M13 12H19Q20 12 19.500 9Q20 3 25 3T30.500 9Q30 12 31 12H40Q43 12 43 15V20Q43 21 41 21Q35 22 35 27T41 33Q43 33 43 34V41Q43 44 40 44H33Q31 44 31 42Q30 36 26 36T21 42Q21 44 19 44H15Q12 44 12 41V34Q12 32 10 32.500Q4 32 4 27T10 21.500Q12 22 12 20V14Q12 12 13 12z" stroke="#b0b0b0" stroke-width="3.500" stroke-linejoin="round" /></svg>
        <svg class="icon dots" viewBox="0 0 48 48" fill="#c4c4c4"><circle cx="7.500" cy="24" r="3.200" /><circle cx="23.500" cy="24" r="3.200" /><circle cx="39.500" cy="24" r="3.200" /></svg>
        <svg class="icon minimize" viewBox="0 0 48 48"><path d="M9 22.500H39" stroke="#fff" stroke-width="3" /></svg>
        <svg class="icon restore" viewBox="0 0 48 48"><path d="M9.500 17.500H30.500V37.500H9.500zM16 16V10.500H37.500V31.500H31" stroke="#fff" stroke-width="3" /></svg>
        <svg class="icon close" viewBox="0 0 48 48"><path d="M8.500 8.500L39.500 39.500M39.500 8.500L8.500 39.500" stroke="#fff" stroke-width="3" /></svg>
      </nav>

      <div class="bookmarks">
        {#each bookmarks as mark}
          <div class="bookmark">
            {@render favicon(mark.icon)}
            <span style:width="{mark.width}px" style:letter-spacing="{mark.tracking}px">{mark.label}</span>
          </div>
        {/each}
        <svg class="more" viewBox="0 0 26 40"><path d="M3 2L22 20L3 38" fill="none" stroke="#9a9a9a" stroke-width="3" /></svg>
        <svg class="favicon folder" viewBox="0 0 48 48"><path d="M6 11Q6 6 11 6H16Q19 6 20 8L23 14H38Q43 14 43 19V36Q43 41 38 41H11Q6 41 6 36z" fill="none" stroke="#a8a8a8" stroke-width="3.500" stroke-linejoin="round" /></svg>
        <span>Other Bookmarks</span>
      </div>

      <div class="page">
        <aside class="users">
          <header>
            <h2>Users</h2>
            <div class="select">
              {@render emoji('moon')}<span class="label">Dark</span>
              <svg class="caret" viewBox="0 0 26 16"><path d="M2 2L13 13L24 2" fill="none" stroke="#111" stroke-width="4" /></svg>
              <ul class="menu">
                {#each themes as item}
                  <li class:selected={item.name === theme}>{@render emoji(item.icon)}<span class="label">{item.name}</span></li>
                {/each}
              </ul>
            </div>
          </header>
          {#each users as user}
            <div class="card">
              <div class="avatar">avatar</div>
              <div class="who"><strong>{user}</strong><span>Online</span></div>
            </div>
          {/each}
        </aside>

        <main>
          <header class="room">
            {@render emoji('speech')}
            <h1>Chat Room</h1>
            <span class="count">3 Active Users</span>
          </header>

          <section class="messages">
            {#each messages as m}
              <article>
                <div class="from"><span class="alt">avatar</span><span class="name">{m.from}</span></div>
                <p>{m.text}{#if m.emoji}{@render emoji(m.emoji)}{/if}</p>
                <div class="reactions">
                  {#each reactions as r}{@render emoji(r)}{/each}
                </div>
              </article>
            {/each}
          </section>

          <footer class="composer">
            <div class="input">Type a message...</div>
            <button class="smiley" aria-label="Emoji">{@render emoji('smile')}</button>
            <button class="send" aria-label="Send">
              <svg viewBox="0 0 42 36"><path d="M0 0L42 17.500L0 36V22L29 17.500L0 13.500z" fill="#fff" /></svg>
            </button>
          </footer>

          <div class="picker">
            {#each picker as name}{@render emoji(name)}{/each}
          </div>
        </main>
      </div>
    </div>
  </div>
</div>

<style>
  :global(body) {
    margin: 0;
    background: #1b1b1b;
  }
  .defs {
    position: absolute;
  }
  .window {
    width: 3839px;
    height: 2263px;
    overflow: hidden;
    background: #1b1b1b;
    font-family: 'Open Sans', 'Noto Sans', sans-serif;
  }
  .window *,
  .window {
    box-sizing: border-box;
  }
  h1,
  h2,
  p,
  ul {
    margin: 0;
    padding: 0;
    font-weight: 400;
  }
  .browser {
    display: flex;
    height: 2259px;
    background: #303030;
    border-bottom: 3px solid #444;
  }
  .emoji {
    display: block;
    flex: none;
    width: 52px;
    height: 52px;
  }
  .emoji :global(svg) {
    display: block;
    width: 100%;
    height: 100%;
    overflow: visible;
  }
  .emoji :global(.zzz) {
    font-weight: 800;
    font-style: italic;
  }
  .emoji :global(.hundred) {
    font-weight: 800;
    font-style: italic;
    letter-spacing: 0;
    fill: #e60a3e;
    stroke: #e60a3e;
    stroke-width: 0.3;
  }

  /* vertical tab rail */
  .rail {
    display: flex;
    flex-direction: column;
    align-items: center;
    flex: none;
    width: 144px;
    padding: 114px 0 10px;
  }
  .rail i {
    width: 48px;
    height: 48px;
    border-radius: 12px;
    background: #5f5650;
  }
  .tab,
  .slot {
    display: flex;
    align-items: center;
    justify-content: center;
    width: 108px;
    flex: none;
  }
  .tab {
    height: 108px;
    margin-bottom: 22px;
    border-radius: 24px;
    background: #444;
  }
  .tab.active {
    margin-top: 6px;
    background: #484848;
    box-shadow: 0 3px 8px rgba(0, 0, 0, 0.3);
  }
  .tab.active i {
    background: #806f65;
  }
  .car {
    height: 122px;
  }
  .car .emoji {
    width: 40px;
    height: 40px;
  }
  .add {
    height: 114px;
    padding-top: 6px;
  }
  .add svg {
    width: 34px;
    height: 34px;
  }
  .pinned {
    height: 120px;
  }
  .pinned i {
    background: #6e5e54;
  }
  .tools {
    margin-top: auto;
  }
  .tool {
    display: flex;
    align-items: center;
    height: 96px;
  }
  .tool svg {
    width: 48px;
    height: 48px;
  }

  /* browser chrome */
  .body {
    display: flex;
    flex-direction: column;
    width: 3672px;
  }
  .navbar {
    display: flex;
    align-items: center;
    flex: none;
    height: 114px;
    padding-left: 18px;
  }
  .icon {
    flex: none;
    width: 48px;
    height: 48px;
    fill: none;
  }
  .forward {
    margin-left: 61px;
  }
  .refresh {
    margin-left: 58px;
  }
  .address {
    display: flex;
    align-items: center;
    flex: none;
    width: 2236px;
    height: 90px;
    margin-left: 278px;
    padding: 0 36px 0 39px;
    border-radius: 24px;
    background: #454545;
    color: #9b9b9b;
    font-size: 42px;
    letter-spacing: -1.27px;
  }
  .url {
    flex: 1;
    margin: 5px 0 0 36px;
  }
  .url b {
    color: #fff;
    font-weight: 400;
  }
  .puzzle {
    margin-left: 277px;
  }
  .dots {
    margin-left: 67px;
    fill: #c4c4c4;
  }
  .minimize {
    margin-left: 93px;
  }
  .restore {
    margin-left: 89px;
  }
  .close {
    margin-left: 90px;
  }
  .bookmarks {
    display: flex;
    align-items: center;
    flex: none;
    height: 90px;
    padding-left: 37px;
    color: #fff;
    font-size: 36px;
    letter-spacing: -1.35px;
    white-space: nowrap;
  }
  .bookmarks span {
    padding-top: 3px;
  }
  .bookmark {
    display: flex;
    align-items: center;
    gap: 12px;
    margin-right: 36px;
  }
  .favicon {
    flex: none;
    width: 48px;
    height: 48px;
  }
  .live {
    fill: #fff;
    font-size: 23px;
    font-weight: 800;
    letter-spacing: 0;
  }
  .unpad {
    fill: #999;
    font-size: 8px;
    letter-spacing: 0;
  }
  .more {
    width: 26px;
    height: 40px;
    margin-left: 93px;
  }
  .folder {
    margin: 0 12px 0 45px;
  }

  /* chat application */
  .page {
    display: flex;
    flex: none;
    height: 2028px;
    border-radius: 16px;
    overflow: hidden;
    background: #1f2937;
    box-shadow: 0 0 30px rgba(0, 0, 0, 0.35);
  }
  .users {
    position: relative;
    z-index: 1;
    flex: none;
    width: 672px;
    padding: 36px;
    background: #dedfe3;
  }
  .users header {
    display: flex;
    align-items: center;
    justify-content: space-between;
    height: 88px;
    margin-bottom: 72px;
  }
  h2 {
    padding-top: 6px;
    color: #000;
    font-size: 60px;
    letter-spacing: -3.4px;
  }
  .select {
    position: relative;
    z-index: 2;
    display: flex;
    align-items: center;
    width: 316px;
    height: 88px;
    padding: 0 14px 0 33px;
    border-radius: 12px;
    background: #fff;
    font-size: 48px;
    letter-spacing: -1.8px;
  }
  .label {
    padding-top: 4px;
  }
  .select > .label {
    margin-left: 19px;
  }
  .caret {
    width: 26px;
    height: 16px;
    margin-left: auto;
  }
  .menu {
    position: absolute;
    top: 88px;
    left: -1px;
    width: 314px;
    height: 412px;
    padding: 11px;
    border: 3px solid #a5a5a5;
    border-radius: 24px;
    background: #fff;
    box-shadow: 0 48px 96px rgba(0, 0, 0, 0.26), 0 6px 24px rgba(0, 0, 0, 0.12);
    list-style: none;
  }
  .menu li {
    display: flex;
    align-items: center;
    gap: 21px;
    height: 96px;
    padding-left: 24px;
    border-radius: 9px;
  }
  .menu .selected {
    background: #e1e1e1;
    color: #191920;
  }
  .card {
    display: flex;
    align-items: center;
    gap: 36px;
    height: 216px;
    margin-bottom: 36px;
    padding: 0 24px;
    border-radius: 24px;
    background: #fff;
    box-shadow: 0 3px 12px rgba(0, 0, 0, 0.1);
  }
  .avatar {
    flex: none;
    align-self: flex-start;
    width: 144px;
    height: 144px;
    margin-top: 24px;
    border: 6px solid #e5e7eb;
    border-radius: 50%;
    color: #fff;
    font-size: 48px;
    line-height: 76px;
    letter-spacing: -1.5px;
  }
  .who {
    display: flex;
    flex-direction: column;
    padding-top: 6px;
    font-size: 36px;
    line-height: 48px;
    letter-spacing: -1.1px;
  }
  .who strong {
    letter-spacing: -1.8px;
  }
  .who span {
    color: #9ca3af;
  }
  main {
    position: relative;
    display: flex;
    flex-direction: column;
    flex: 1;
    color: #fff;
  }
  .room {
    display: flex;
    align-items: center;
    flex: none;
    height: 168px;
    padding: 2px 48px 0 57px;
    border-bottom: 6px solid #d1d5db;
  }
  .room .emoji {
    width: 65px;
    height: 65px;
  }
  h1 {
    margin-left: 25px;
    padding-top: 4px;
    font-size: 60px;
    font-weight: 700;
    letter-spacing: -1.7px;
  }
  .count {
    margin-left: auto;
    color: #6b7280;
    font-size: 42px;
    letter-spacing: -1.2px;
  }
  .messages {
    flex: 1;
    padding: 108px 48px 0;
  }
  article {
    height: 372px;
  }
  .from {
    display: flex;
    height: 120px;
    font-size: 48px;
    line-height: 72px;
    letter-spacing: -2.1px;
  }
  .alt {
    width: 120px;
    margin-top: 15px;
  }
  .name {
    margin-top: 27px;
  }
  article p {
    display: flex;
    align-items: center;
    height: 132px;
    padding: 1px 0 0 36px;
    border-radius: 24px;
    background: #f3f4f6;
    color: #000;
    font-size: 42px;
    letter-spacing: -1.6px;
  }
  article p .emoji {
    width: 49px;
    height: 49px;
    margin-left: 17px;
  }
  .reactions {
    display: flex;
    align-items: center;
    gap: 31.5px;
    height: 76px;
    padding-left: 28px;
  }
  .reactions .emoji {
    width: 42px;
    height: 42px;
  }
  .composer {
    display: flex;
    align-items: center;
    flex: none;
    height: 198px;
    padding: 0 36px 0 72px;
    border-top: 6px solid #d1d5db;
  }
  .input {
    flex: 1;
    height: 120px;
    padding: 4px 48px 0;
    border-radius: 60px;
    background: #f3f4f6;
    color: #9ca3af;
    font-size: 48px;
    line-height: 120px;
    letter-spacing: -1.7px;
  }
  button {
    display: flex;
    align-items: center;
    justify-content: center;
    flex: none;
    padding: 0;
    border: 0;
    border-radius: 50%;
  }
  .smiley {
    width: 138px;
    height: 144px;
    margin: 0 24px 0 36px;
    padding-top: 5px;
    background: #e5e7eb;
  }
  .smiley .emoji {
    width: 54px;
    height: 54px;
  }
  .send {
    width: 120px;
    height: 120px;
    background: #2563eb;
  }
  .send svg {
    width: 42px;
    height: 36px;
  }
  .picker {
    position: absolute;
    right: 60px;
    bottom: 192px;
    display: grid;
    grid-template-columns: repeat(8, 91.6px);
    grid-auto-rows: 132px;
    place-items: center;
    width: 768px;
    height: 576px;
    padding: 22px 0 0 39px;
    border-radius: 24px;
    background: #fff;
    box-shadow: 0 30px 45px rgba(0, 0, 0, 0.1), 0 6px 18px rgba(0, 0, 0, 0.06);
  }
  .picker .emoji {
    width: 81px;
    height: 81px;
  }
</style>
